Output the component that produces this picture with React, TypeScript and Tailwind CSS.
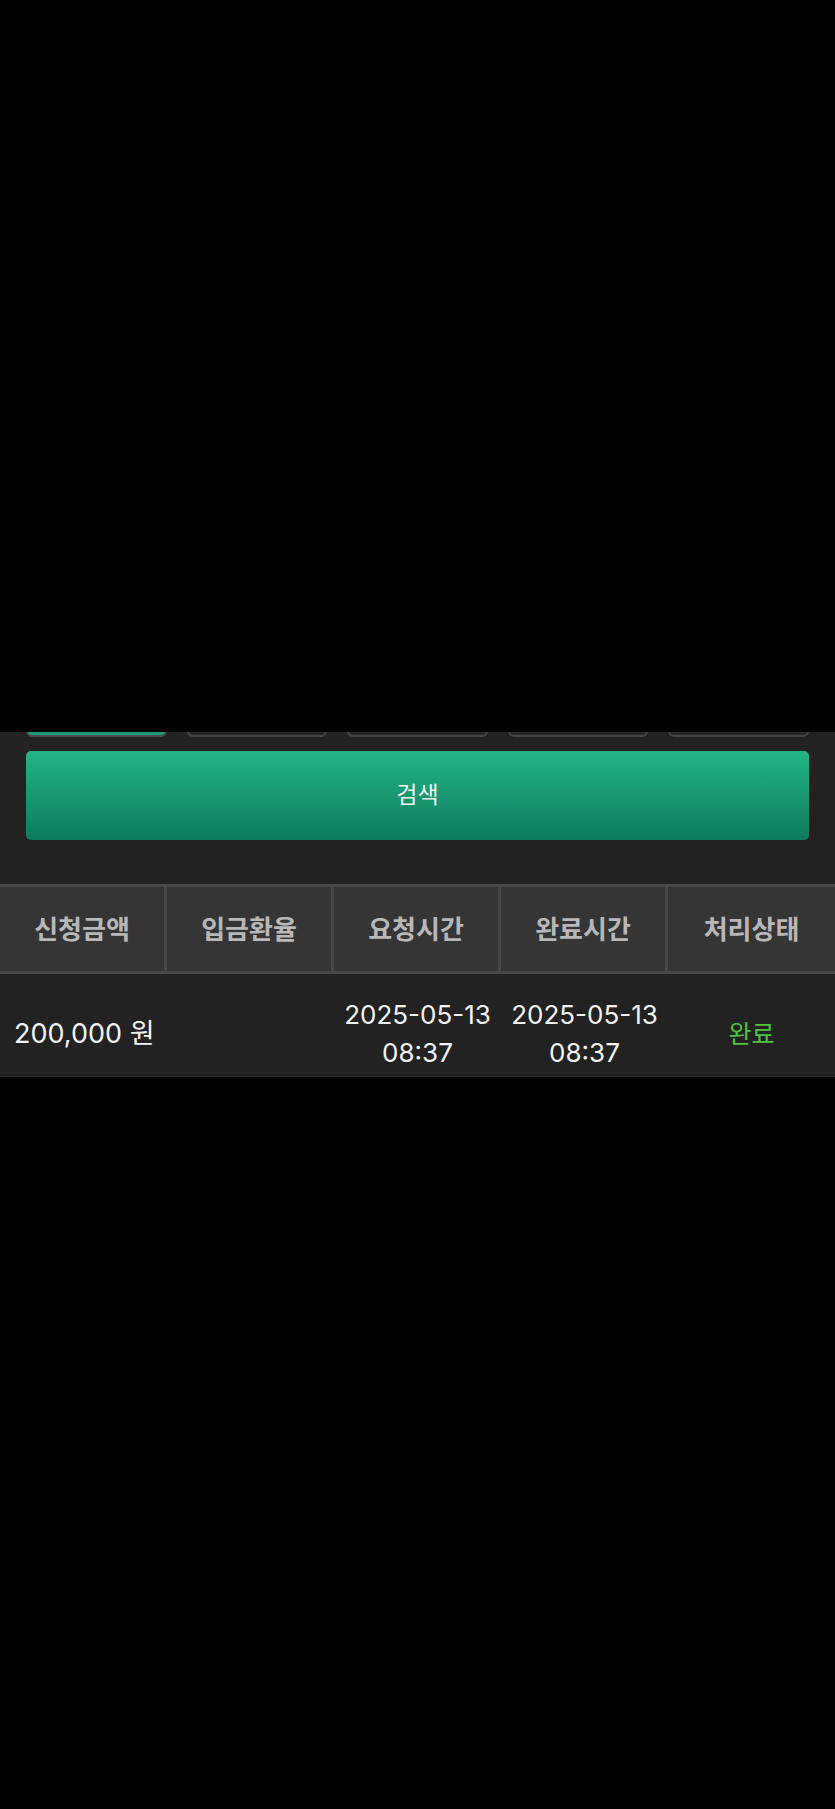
import React from "react";

const headers = ["신청금액", "입금환율", "요청시간", "완료시간", "처리상태"];

const font = {
  fontFamily: '"Inter", "Noto Sans CJK KR", "Noto Sans", sans-serif',
};

export default function App() {
  return (
    <div className="min-h-[1809px] w-full bg-black" style={font}>
      <div className="h-[732px] bg-black" />

      <section className="bg-[#222222] pb-[44px]">
        {/* period filter buttons, only their bottom edge shows */}
        <div className="flex h-[5px] flex-col justify-end overflow-hidden">
          <div className="grid grid-cols-5 gap-[20px] px-[26px]">
            {[0, 1, 2, 3, 4].map((idx) => (
              <div
                key={idx}
                className={
                  idx === 0
                    ? "h-[48px] rounded-[6px] border-2 border-[#4a4a4a] bg-[#1a9a72]"
                    : "h-[48px] rounded-[6px] border-2 border-[#464646] bg-[#262626]"
                }
              />
            ))}
          </div>
        </div>

        <div className="px-[26px] pt-[14px]">
          <button
            type="button"
            className="flex h-[89px] w-full items-center justify-center rounded-[5px] bg-gradient-to-b from-[#23b485] to-[#0d7c5e] text-[23px] text-[#f2f2f2]"
          >
            검색
          </button>
        </div>
      </section>

      <div className="border-y-[3px] border-[#474747] bg-[#353535]">
        <div className="grid h-[84px] grid-cols-5">
          {headers.map((h, idx) => (
            <div
              key={h}
              className={
                idx < 4
                  ? "flex items-center justify-center border-r-[3px] border-[#474747] text-[26px] font-bold text-[#b8b8b8]"
                  : "flex items-center justify-center text-[26px] font-bold text-[#b8b8b8]"
              }
            >
              {h}
            </div>
          ))}
        </div>
      </div>

      <div className="h-[103px] bg-[#222222] pt-[22px]">
        <div className="grid h-[76px] grid-cols-5 leading-[38px] text-[#f4f4f4]">
          <div className="flex items-center whitespace-nowrap pl-[14px] text-[27px]">
            200,000 원
          </div>
          <div />
          <div className="flex flex-col items-center justify-center text-[26px]">
            <span>2025-05-13</span>
            <span>08:37</span>
          </div>
          <div className="flex flex-col items-center justify-center text-[26px]">
            <span>2025-05-13</span>
            <span>08:37</span>
          </div>
          <div className="flex items-center justify-center text-[25px] text-[#4fc23f]">
            완료
          </div>
        </div>
      </div>
    </div>
  );
}
